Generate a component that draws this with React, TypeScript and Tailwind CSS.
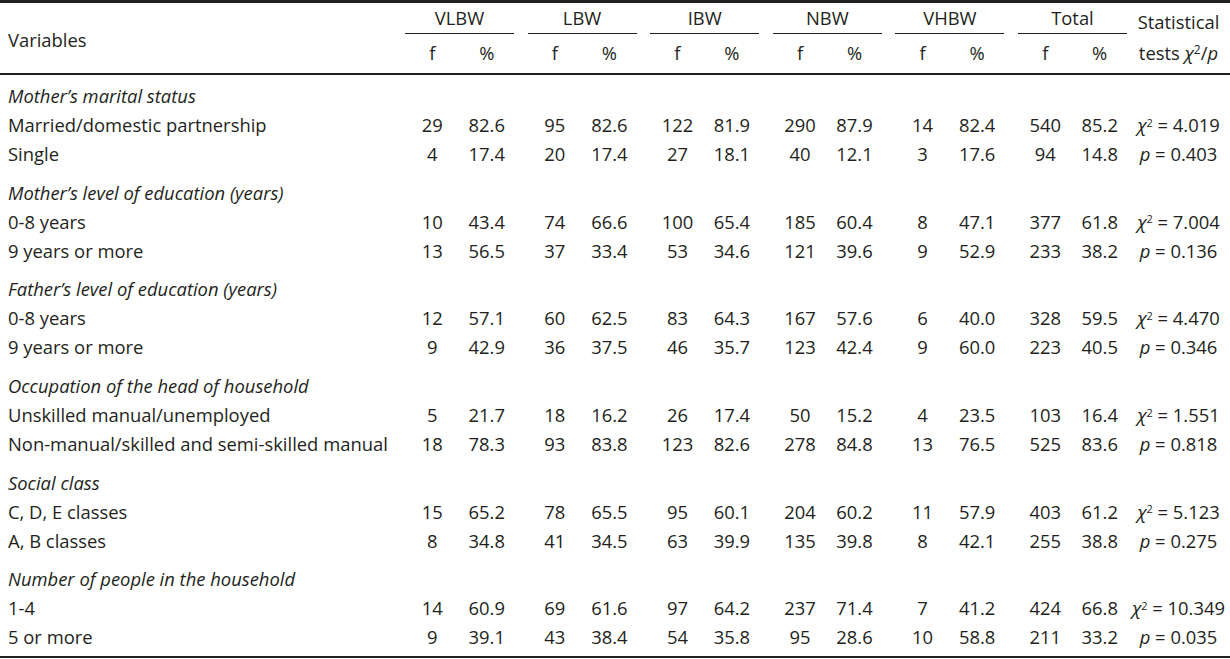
import React from "react";

const groups = ["VLBW", "LBW", "IBW", "NBW", "VHBW", "Total"];

type Row = { label: string; v: string[]; stat: [string, string] };

const sections: { title: string; rows: Row[] }[] = [
  {
    title: "Mother’s marital status",
    rows: [
      { label: "Married/domestic partnership", v: ["29", "82.6", "95", "82.6", "122", "81.9", "290", "87.9", "14", "82.4", "540", "85.2"], stat: ["chi", "4.019"] },
      { label: "Single", v: ["4", "17.4", "20", "17.4", "27", "18.1", "40", "12.1", "3", "17.6", "94", "14.8"], stat: ["p", "0.403"] },
    ],
  },
  {
    title: "Mother’s level of education (years)",
    rows: [
      { label: "0-8 years", v: ["10", "43.4", "74", "66.6", "100", "65.4", "185", "60.4", "8", "47.1", "377", "61.8"], stat: ["chi", "7.004"] },
      { label: "9 years or more", v: ["13", "56.5", "37", "33.4", "53", "34.6", "121", "39.6", "9", "52.9", "233", "38.2"], stat: ["p", "0.136"] },
    ],
  },
  {
    title: "Father’s level of education (years)",
    rows: [
      { label: "0-8 years", v: ["12", "57.1", "60", "62.5", "83", "64.3", "167", "57.6", "6", "40.0", "328", "59.5"], stat: ["chi", "4.470"] },
      { label: "9 years or more", v: ["9", "42.9", "36", "37.5", "46", "35.7", "123", "42.4", "9", "60.0", "223", "40.5"], stat: ["p", "0.346"] },
    ],
  },
  {
    title: "Occupation of the head of household",
    rows: [
      { label: "Unskilled manual/unemployed", v: ["5", "21.7", "18", "16.2", "26", "17.4", "50", "15.2", "4", "23.5", "103", "16.4"], stat: ["chi", "1.551"] },
      { label: "Non-manual/skilled and semi-skilled manual", v: ["18", "78.3", "93", "83.8", "123", "82.6", "278", "84.8", "13", "76.5", "525", "83.6"], stat: ["p", "0.818"] },
    ],
  },
  {
    title: "Social class",
    rows: [
      { label: "C, D, E classes", v: ["15", "65.2", "78", "65.5", "95", "60.1", "204", "60.2", "11", "57.9", "403", "61.2"], stat: ["chi", "5.123"] },
      { label: "A, B classes", v: ["8", "34.8", "41", "34.5", "63", "39.9", "135", "39.8", "8", "42.1", "255", "38.8"], stat: ["p", "0.275"] },
    ],
  },
  {
    title: "Number of people in the household",
    rows: [
      { label: "1-4", v: ["14", "60.9", "69", "61.6", "97", "64.2", "237", "71.4", "7", "41.2", "424", "66.8"], stat: ["chi", "10.349"] },
      { label: "5 or more", v: ["9", "39.1", "43", "38.4", "54", "35.8", "95", "28.6", "10", "58.8", "211", "33.2"], stat: ["p", "0.035"] },
    ],
  },
];

const cols = "grid grid-cols-[405px_repeat(5,122.6px)_109px_1fr]";

const Stat = ({ kind, value }: { kind: string; value: string }) =>
  kind === "chi" ? (
    <span>
      <span className="italic">χ</span>
      <sup className="text-[11px]">2</sup> = {value}
    </span>
  ) : (
    <span>
      <span className="italic">p</span> = {value}
    </span>
  );

const App = () => {
  return (
    <div className="w-[1230px] h-[659px] bg-white text-[#231f20] font-['Open_Sans',sans-serif] text-[18.4px] leading-none">
      <div className="border-t-[3px] border-b-2 border-[#231f20]">
        <div className={cols}>
          <div className="flex items-center pl-2 h-[70px] pt-1">Variables</div>
          {groups.map((g, i) => (
            <div key={g} className={i < 5 ? "pr-[13.6px]" : ""}>
              <div className="w-[109px]">
                <div className="h-[31px] flex items-center justify-center border-b border-[#231f20]">{g}</div>
                <div className="grid grid-cols-2 h-[39px] items-center text-center">
                  <span>f</span>
                  <span>%</span>
                </div>
              </div>
            </div>
          ))}
          <div className="flex flex-col items-center justify-center gap-[13px] -mt-[1px]">
            <span>Statistical</span>
            <span>
              tests <span className="italic">χ</span>
              <sup className="text-[12px]">2</sup>/<span className="italic">p</span>
            </span>
          </div>
        </div>
      </div>

      <div className="border-b-2 border-[#231f20] pt-[7px] pb-[4px] flex flex-col gap-[9.6px]">
        {sections.map((s) => (
          <div key={s.title}>
            <div className="h-[29px] flex items-center pl-2 italic">{s.title}</div>
            {s.rows.map((r) => (
              <div key={r.label} className={`${cols} h-[29px] items-center`}>
                <div className="pl-2">{r.label}</div>
                {groups.map((g, i) => (
                  <div key={g} className={i < 5 ? "pr-[13.6px]" : ""}>
                    <div className="w-[109px] grid grid-cols-2 text-center">
                      <span>{r.v[i * 2]}</span>
                      <span>{r.v[i * 2 + 1]}</span>
                    </div>
                  </div>
                ))}
                <div className="text-center">
                  <Stat kind={r.stat[0]} value={r.stat[1]} />
                </div>
              </div>
            ))}
          </div>
        ))}
      </div>
    </div>
  );
};

export default App;
